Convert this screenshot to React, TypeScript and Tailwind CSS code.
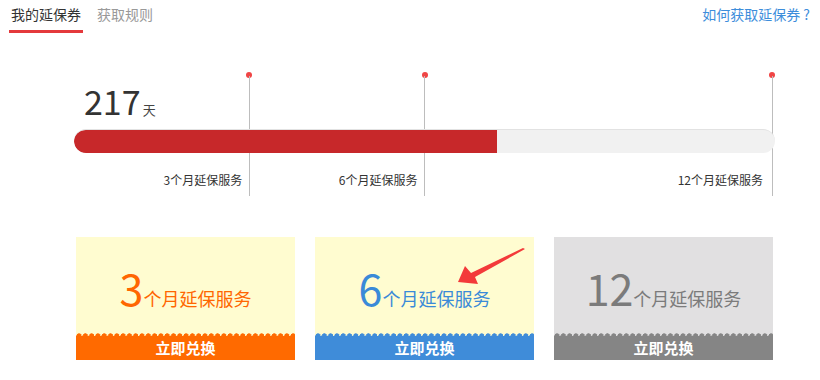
import React from "react";

const font = { fontFamily: '"Noto Sans CJK SC", "Noto Sans", sans-serif' };

const TOTAL_DAYS = 360;
const days = 217;

const cards = [
  {
    num: "3",
    top: "bg-[#fffcd0]",
    numColor: "text-[#ff6600]",
    textColor: "text-[#ff6600]",
    band: "bg-[#ff6a00]",
    wave: "bg-[radial-gradient(circle_at_3px_4px,#ff6a00_2.4px,transparent_2.9px)]",
    arrow: false,
  },
  {
    num: "6",
    top: "bg-[#fffcd0]",
    numColor: "text-[#3a8ad8]",
    textColor: "text-[#3a8ad8]",
    band: "bg-[#3f8cd9]",
    wave: "bg-[radial-gradient(circle_at_3px_4px,#3f8cd9_2.4px,transparent_2.9px)]",
    arrow: true,
  },
  {
    num: "12",
    top: "bg-[#e1e0e1]",
    numColor: "text-[#7b7b7b]",
    textColor: "text-[#7b7b7b]",
    band: "bg-[#858585]",
    wave: "bg-[radial-gradient(circle_at_3px_4px,#858585_2.4px,transparent_2.9px)]",
    arrow: false,
  },
];

const Arrow = () => (
  <svg
    className="absolute left-[125px] top-[8px]"
    width="90"
    height="45"
    viewBox="0 0 90 45"
  >
    <polygon
      points="83,3 85,4 35,32 38,39 18,37 25,21 31,28"
      fill="#f33a3a"
    />
  </svg>
);

export default function App() {
  const pct = (days / TOTAL_DAYS) * 100;
  return (
    <div className="w-[820px] h-[380px] bg-white text-[#333]" style={font}>
      {/* tabs */}
      <div className="flex justify-between items-start px-[10px] h-[33px]">
        <div className="flex items-start text-[14px]">
          <div className="-ml-px w-[74px] pt-[5px] pb-[6px] text-center leading-[19px] border-b-[3px] border-[#e4393c] text-[#333]">
            我的延保券
          </div>
          <div className="ml-[14px] pt-[5px] leading-[19px] text-[#999]">获取规则</div>
        </div>
        <div className="pt-[5px] text-[14px] leading-[19px] text-[#3d8ddb]">如何获取延保券 ?</div>
      </div>

      {/* timeline */}
      <div className="relative ml-[74px] mt-[39px] w-[701px] h-[126px]">
        {[25, 50].map((p) => (
          <div
            key={p}
            className="absolute top-0 flex flex-col items-center -translate-x-1/2"
            style={{ left: `${p}%` }}
          >
            <div className="w-[6px] h-[6px] rounded-full bg-[#f04545]" />
            <div className="w-px h-[120px] bg-[#bdbdbd] -mt-[2px]" />
          </div>
        ))}
        <div className="absolute top-0 right-[3px] flex flex-col items-center translate-x-1/2">
          <div className="w-[6px] h-[6px] rounded-full bg-[#f04545]" />
          <div className="w-px h-[120px] bg-[#bdbdbd] -mt-[2px]" />
        </div>

        <div className="pl-[10px] pt-[10px] flex items-baseline h-[57px]">
          <span className="text-[34px] leading-[38px] text-[#333]">217</span>
          <span className="ml-[2px] text-[13px] text-[#444]">天</span>
        </div>

        <div className="relative h-[24px] rounded-full bg-[#f1f1f1] border-t border-[#e2e2e2] overflow-hidden">
          <div
            className="h-full rounded-l-full bg-[#c7282a]"
            style={{ width: `${pct}%` }}
          />
        </div>

        <div className="grid grid-cols-[25%_25%_50%] mt-[19px] text-[12px] leading-[16px] text-[#333]">
          <div className="text-right pr-[7px]">3个月延保服务</div>
          <div className="text-right pr-[7px]">6个月延保服务</div>
          <div className="text-right pr-[12px]">12个月延保服务</div>
        </div>
      </div>

      {/* cards */}
      <div className="flex gap-[20px] ml-[76px] mt-[39px]">
        {cards.map((c) => (
          <div key={c.num} className="relative w-[219px] h-[123px] flex flex-col">
            <div className={`flex-1 flex items-baseline justify-center pt-[22px] ${c.top}`}>
              <span className={`text-[43px] leading-[56px] ${c.numColor}`}>{c.num}</span>
              <span className={`text-[18px] ${c.textColor}`}>个月延保服务</span>
            </div>
            <div className={`h-[4px] ${c.top}`}>
              <div className={`h-full ${c.wave} bg-[length:6.3px_4px] bg-repeat-x`} />
            </div>
            <div className={`h-[24px] flex items-center justify-center text-white text-[15px] font-bold ${c.band}`}>
              立即兑换
            </div>
            {c.arrow && <Arrow />}
          </div>
        ))}
      </div>
    </div>
  );
}
